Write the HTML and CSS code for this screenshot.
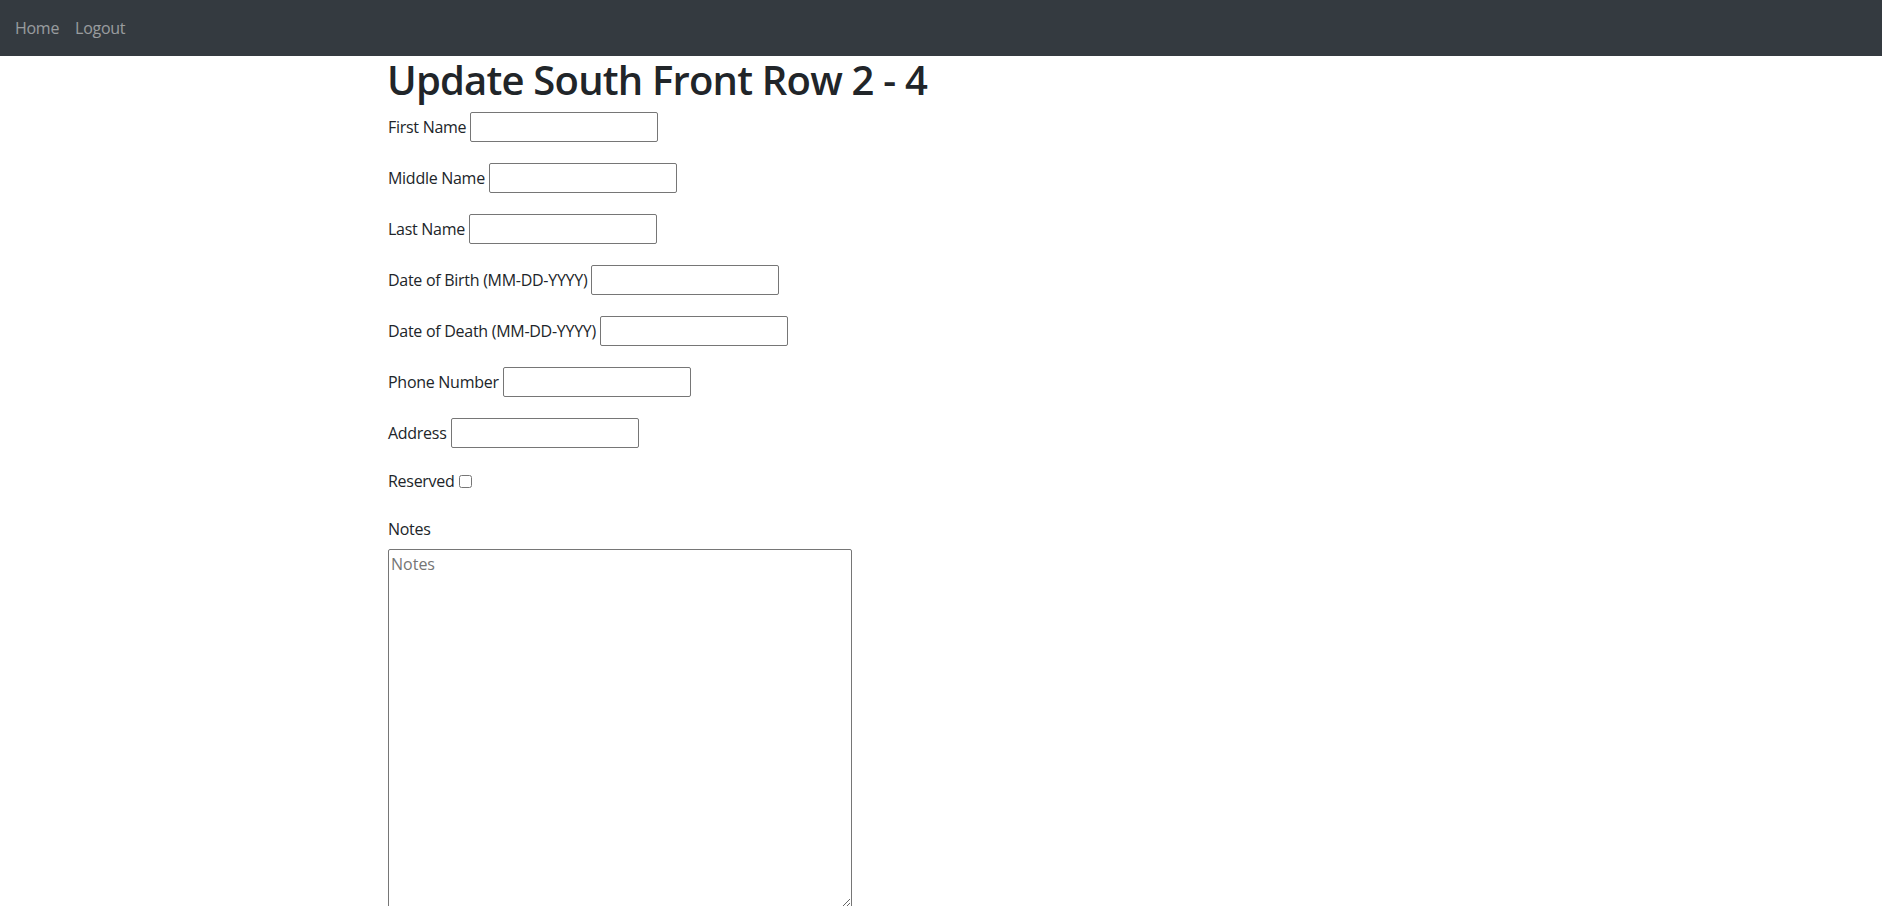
FILE: index.html
```html
<!DOCTYPE html>
<html lang="en">
<head>
<meta charset="utf-8">
<title>Update South Front Row 2 - 4</title>
<link rel="stylesheet" href="styles.css">
</head>
<body>
<nav class="navbar">
  <a class="nav-link" href="#">Home</a>
  <a class="nav-link" href="#">Logout</a>
</nav>
<main class="container">
  <h1 class="title">Update South Front Row 2 - 4</h1>
  <form class="form">
    <div class="field"><label for="fn">First Name</label><input id="fn" class="text-input" type="text"></div>
    <div class="field"><label for="mn">Middle Name</label><input id="mn" class="text-input" type="text"></div>
    <div class="field"><label for="ln">Last Name</label><input id="ln" class="text-input" type="text"></div>
    <div class="field"><label for="dob">Date of Birth (MM-DD-YYYY)</label><input id="dob" class="text-input" type="text"></div>
    <div class="field"><label for="dod">Date of Death (MM-DD-YYYY)</label><input id="dod" class="text-input" type="text"></div>
    <div class="field"><label for="ph">Phone Number</label><input id="ph" class="text-input" type="text"></div>
    <div class="field"><label for="ad">Address</label><input id="ad" class="text-input" type="text"></div>
    <div class="field field-check"><label for="rs">Reserved</label><input id="rs" class="check" type="checkbox"></div>
    <label class="notes-label" for="notes">Notes</label>
    <textarea id="notes" class="notes" placeholder="Notes"></textarea>
  </form>
</main>
</body>
</html>
```
FILE: styles.css
```css
* { box-sizing: border-box; }
html, body { margin: 0; padding: 0; }
body {
  font-family: "Open Sans", "Noto Sans", sans-serif;
  font-size: 16px;
  line-height: 24px;
  letter-spacing: -0.28px;
  color: #212529;
  background: #fff;
  overflow: hidden;
  height: 906px;
}
.navbar {
  height: 56px;
  background: #343a40;
  display: flex;
  align-items: center;
  padding: 0 7px;
}
.nav-link {
  color: rgba(255, 255, 255, 0.5);
  text-decoration: none;
  padding: 8px 8px;
  line-height: 24px;
}
.container {
  max-width: 1140px;
  margin: 0 auto;
  padding: 0 16px 0 17px;
}
.title {
  font-size: 40px;
  font-weight: 600;
  line-height: 48px;
  letter-spacing: -0.8px;
  margin: 0 0 8px -1px;
}
.form { display: block; }
.field {
  display: flex;
  align-items: center;
  gap: 4px;
  height: 30px;
  margin-bottom: 21px;
}
.text-input {
  width: 188px;
  height: 30px;
  border: 1px solid #767676;
  border-radius: 2px;
  padding: 1px 3px;
  font: inherit;
  background: #fff;
}
.field-check {
  height: 24px;
  margin-bottom: 24px;
  gap: 4px;
}
.check {
  width: 13px;
  height: 13px;
  margin: 0;
}
.notes-label {
  display: block;
  margin-bottom: 8px;
}
.notes {
  display: block;
  width: 464px;
  height: 359px;
  border: 1px solid #767676;
  border-radius: 2px;
  padding: 2px 2px;
  font: inherit;
  resize: both;
}
.notes::placeholder { color: #757575; }
```
